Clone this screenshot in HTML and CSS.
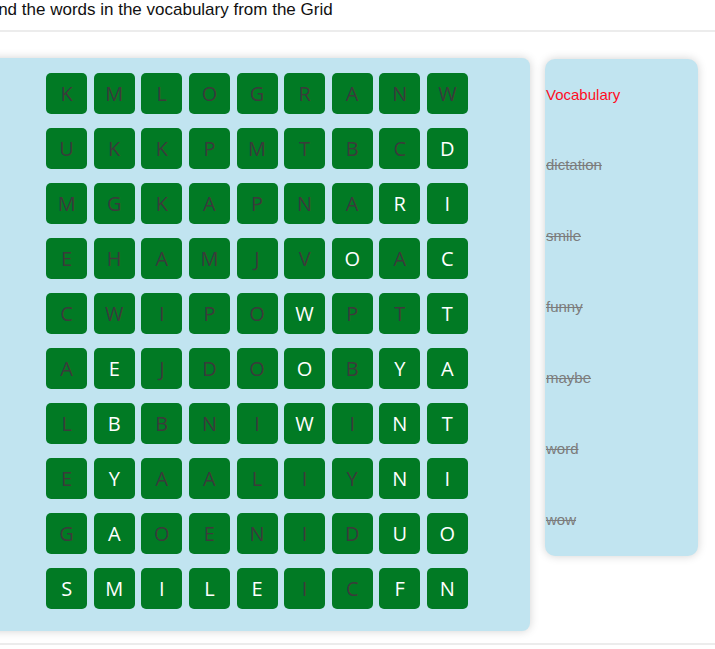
FILE: index.html
```html
<!DOCTYPE html>
<html>
<head>
<meta charset="utf-8">
<link rel="stylesheet" href="styles.css">
</head>
<body>
<div class="page">
  <div class="title">Find the words in the vocabulary from the Grid</div>
  <div class="game">
    <div class="board">
      <div class="row"><span class="cell">K</span><span class="cell">M</span><span class="cell">L</span><span class="cell">O</span><span class="cell">G</span><span class="cell">R</span><span class="cell">A</span><span class="cell">N</span><span class="cell">W</span></div>
      <div class="row"><span class="cell">U</span><span class="cell">K</span><span class="cell">K</span><span class="cell">P</span><span class="cell">M</span><span class="cell">T</span><span class="cell">B</span><span class="cell">C</span><span class="cell found">D</span></div>
      <div class="row"><span class="cell">M</span><span class="cell">G</span><span class="cell">K</span><span class="cell">A</span><span class="cell">P</span><span class="cell">N</span><span class="cell">A</span><span class="cell found">R</span><span class="cell found">I</span></div>
      <div class="row"><span class="cell">E</span><span class="cell">H</span><span class="cell">A</span><span class="cell">M</span><span class="cell">J</span><span class="cell">V</span><span class="cell found">O</span><span class="cell">A</span><span class="cell found">C</span></div>
      <div class="row"><span class="cell">C</span><span class="cell">W</span><span class="cell">I</span><span class="cell">P</span><span class="cell">O</span><span class="cell found">W</span><span class="cell">P</span><span class="cell">T</span><span class="cell found">T</span></div>
      <div class="row"><span class="cell">A</span><span class="cell found">E</span><span class="cell">J</span><span class="cell">D</span><span class="cell">O</span><span class="cell found">O</span><span class="cell">B</span><span class="cell found">Y</span><span class="cell found">A</span></div>
      <div class="row"><span class="cell">L</span><span class="cell found">B</span><span class="cell">B</span><span class="cell">N</span><span class="cell">I</span><span class="cell found">W</span><span class="cell">I</span><span class="cell found">N</span><span class="cell found">T</span></div>
      <div class="row"><span class="cell">E</span><span class="cell found">Y</span><span class="cell">A</span><span class="cell">A</span><span class="cell">L</span><span class="cell">I</span><span class="cell">Y</span><span class="cell found">N</span><span class="cell found">I</span></div>
      <div class="row"><span class="cell">G</span><span class="cell found">A</span><span class="cell">O</span><span class="cell">E</span><span class="cell">N</span><span class="cell">I</span><span class="cell">D</span><span class="cell found">U</span><span class="cell found">O</span></div>
      <div class="row"><span class="cell found">S</span><span class="cell found">M</span><span class="cell found">I</span><span class="cell found">L</span><span class="cell found">E</span><span class="cell">I</span><span class="cell">C</span><span class="cell found">F</span><span class="cell found">N</span></div>
    </div>
    <div class="vocab">
      <div class="vocab-item vocab-title">Vocabulary</div>
      <div class="vocab-item done">dictation</div>
      <div class="vocab-item done">smile</div>
      <div class="vocab-item done">funny</div>
      <div class="vocab-item done">maybe</div>
      <div class="vocab-item done">word</div>
      <div class="vocab-item done">wow</div>
    </div>
  </div>
</div>
</body>
</html>
```

FILE: styles.css
```css
html, body {
  margin: 0;
  padding: 0;
  background: #ffffff;
  overflow: hidden;
}

.page {
  margin-left: -16px;
  width: 760px;
  font-family: "Liberation Sans", Arial, sans-serif;
}

.title {
  font-size: 17px;
  line-height: 19px;
  height: 30px;
  padding-left: 0;
  color: #111;
}

.game {
  border-top: 2px solid #ececec;
  border-bottom: 2px solid #ececec;
  padding: 26px 0 12px 0;
  display: flex;
  align-items: flex-start;
  gap: 15px;
}

.board {
  width: 546px;
  box-sizing: border-box;
  background: #c1e4f0;
  border-radius: 8px;
  box-shadow: 0 0 10px rgba(0, 0, 0, 0.18);
  padding: 15px 0 8px 0;
  display: flex;
  flex-direction: column;
  align-items: center;
}

.row {
  display: flex;
  gap: 6.6px;
  margin-bottom: 14px;
}

.cell {
  width: 41px;
  height: 41px;
  border-radius: 5px;
  background: #017a24;
  color: #3b3b3b;
  font-family: "Open Sans", "Noto Sans", sans-serif;
  font-size: 20px;
  display: flex;
  align-items: center;
  justify-content: center;
}

.cell.found {
  color: #ffffff;
}

.vocab {
  margin-top: 1px;
  width: 153px;
  background: #c1e4f0;
  border-radius: 10px;
  box-shadow: 0 0 10px rgba(0, 0, 0, 0.18);
  display: flex;
  flex-direction: column;
}

.vocab-item {
  height: 71px;
  display: flex;
  align-items: center;
  padding-left: 1px;
  font-size: 15px;
}

.vocab-title {
  color: #ff0d1f;
}

.done {
  color: #7c7c7c;
  text-decoration: line-through;
  padding-bottom: 3px;
  box-sizing: border-box;
}
```
